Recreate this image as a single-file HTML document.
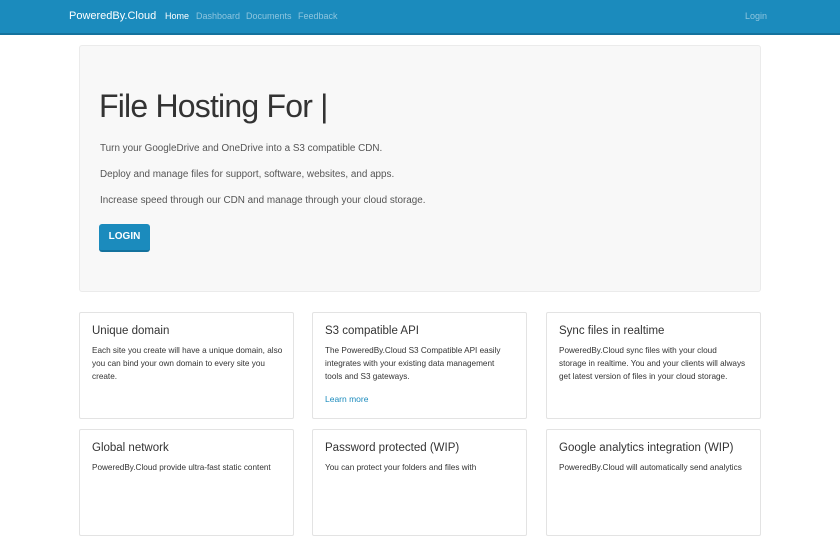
<!DOCTYPE html>
<html><head><style>
*{box-sizing:border-box;margin:0;padding:0}
body{width:840px;height:472px;overflow:hidden;background:#fff;font-family:"Liberation Sans",sans-serif;color:#333}
.nav{height:35px;background:#1b8bbd;border-bottom:2px solid #14729d;position:relative}
.nav span{position:absolute;top:11px;font-size:9px;color:#8ec5de}
.brand{left:69px;font-size:11px!important;top:10px!important;color:#fff!important}
.jum{position:absolute;left:79px;top:45px;width:682px;height:247px;background:#f8f8f8;border:1px solid #ebebeb;border-radius:3px}
h1{position:absolute;left:19px;top:42px;font-size:32px;font-weight:300;color:#333;letter-spacing:-0.8px}
.p{position:absolute;left:20px;font-size:9.9px;color:#555}
.btn{position:absolute;left:19px;top:178px;width:51px;height:28px;background:#1b8bbd;border-bottom:2px solid #14729d;border-radius:3px;color:#fff;font-weight:bold;font-size:10px;text-align:center;line-height:26px}
.card{position:absolute;width:215px;height:107px;border:1px solid #e3e3e3;border-radius:2px;padding:12px 12px}
.card h3{font-size:11.5px;font-weight:normal;color:#333;margin-bottom:7px}
.card p{font-size:8.2px;line-height:13px;color:#333;white-space:nowrap}
.card a{display:block;margin-top:11px;font-size:8.5px;color:#1b8bbd;text-decoration:none}
</style></head><body>
<div class="nav"><span class="brand">PoweredBy.Cloud</span><span style="left:165px;color:#fff">Home</span><span style="left:196px">Dashboard</span><span style="left:246px">Documents</span><span style="left:298px">Feedback</span><span style="left:745px">Login</span></div>
<div class="jum"><h1>File Hosting For |</h1>
<div class="p" style="top:97px">Turn your GoogleDrive and OneDrive into a S3 compatible CDN.</div>
<div class="p" style="top:123px">Deploy and manage files for support, software, websites, and apps.</div>
<div class="p" style="top:149px">Increase speed through our CDN and manage through your cloud storage.</div>
<div class="btn">LOGIN</div></div>
<div class="card" style="left:79px;top:312px"><h3>Unique domain</h3><p>Each site you create will have a unique domain, also<br>you can bind your own domain to every site you<br>create.</p></div>
<div class="card" style="left:312px;top:312px"><h3>S3 compatible API</h3><p>The PoweredBy.Cloud S3 Compatible API easily<br>integrates with your existing data management<br>tools and S3 gateways.</p><a>Learn more</a></div>
<div class="card" style="left:546px;top:312px"><h3>Sync files in realtime</h3><p>PoweredBy.Cloud sync files with your cloud<br>storage in realtime. You and your clients will always<br>get latest version of files in your cloud storage.</p></div>
<div class="card" style="left:79px;top:429px"><h3>Global network</h3><p>PoweredBy.Cloud provide ultra-fast static content</p></div>
<div class="card" style="left:312px;top:429px"><h3>Password protected (WIP)</h3><p>You can protect your folders and files with</p></div>
<div class="card" style="left:546px;top:429px"><h3>Google analytics integration (WIP)</h3><p>PoweredBy.Cloud will automatically send analytics</p></div>
</body></html>
